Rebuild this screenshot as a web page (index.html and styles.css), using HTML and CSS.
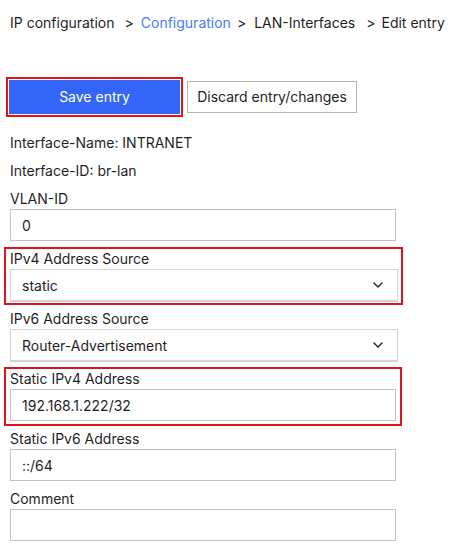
FILE: index.html
```html
<!DOCTYPE html>
<html lang="en">
<head>
<meta charset="utf-8">
<title>Edit entry</title>
<link rel="stylesheet" href="styles.css">
</head>
<body>
<nav class="crumbs">
  <span class="crumb">IP configuration</span>
  <span class="sep sep-1">&gt;</span>
  <span class="crumb link">Configuration</span>
  <span class="sep sep-2">&gt;</span>
  <span class="crumb">LAN-Interfaces</span>
  <span class="sep sep-3">&gt;</span>
  <span class="crumb">Edit entry</span>
</nav>

<div class="actions">
  <button class="btn btn-primary" type="button">Save entry</button>
  <button class="btn btn-secondary" type="button">Discard entry/changes</button>
</div>

<p class="info">Interface-Name: INTRANET</p>
<p class="info">Interface-ID: br-lan</p>

<div class="field">
  <label class="label">VLAN-ID</label>
  <input class="input" type="text" value="0">
</div>

<div class="hl hl-select">
  <div class="field">
    <label class="label">IPv4 Address Source</label>
    <div class="select-wrap">
      <select class="select"><option>static</option></select>
      <svg class="chevron" width="10" height="6" viewBox="0 0 10 6"><path d="M1 1 L5 5 L9 1" fill="none" stroke="#222" stroke-width="1.4" stroke-linecap="round" stroke-linejoin="round"/></svg>
    </div>
  </div>
</div>

<div class="field">
  <label class="label">IPv6 Address Source</label>
  <div class="select-wrap">
    <select class="select"><option>Router-Advertisement</option></select>
    <svg class="chevron" width="10" height="6" viewBox="0 0 10 6"><path d="M1 1 L5 5 L9 1" fill="none" stroke="#222" stroke-width="1.4" stroke-linecap="round" stroke-linejoin="round"/></svg>
  </div>
</div>

<div class="hl hl-input">
  <div class="field">
    <label class="label">Static IPv4 Address</label>
    <input class="input" type="text" value="192.168.1.222/32">
  </div>
</div>

<div class="field">
  <label class="label">Static IPv6 Address</label>
  <input class="input" type="text" value="::/64">
</div>

<div class="field">
  <label class="label">Comment</label>
  <input class="input" type="text" value="">
</div>
</body>
</html>
```

FILE: styles.css
```css
* { box-sizing: border-box; }

html, body {
  margin: 0;
  background: #ffffff;
}

body {
  padding: 13px 0 0 10px;
  font-family: Inter, "Noto Sans", sans-serif;
  font-size: 14px;
  line-height: 20px;
  color: #1f1f1f;
}

.crumbs {
  display: flex;
  align-items: baseline;
  white-space: nowrap;
  height: 20px;
}

.crumb.link { color: #4a7af5; }

.sep { color: #2a2a2a; }
.sep-1 { margin: 0 7px 0 10px; }
.sep-2 { margin: 0 8px 0 6px; }
.sep-3 { margin: 0 6px 0 11px; }

.actions {
  display: flex;
  align-items: center;
  gap: 7px;
  margin: 47px 0 19px -1px;
  height: 34px;
}

.btn {
  font-family: inherit;
  font-size: 14px;
  line-height: 20px;
  margin: 0;
  cursor: pointer;
}

.btn-primary {
  width: 171px;
  height: 34px;
  background: #3366f8;
  color: #ffffff;
  border: none;
  box-shadow: 0 0 0 1px #ffffff, 0 0 0 3px #e3111b;
}

.btn-secondary {
  width: 170px;
  height: 32px;
  background: #ffffff;
  color: #1f1f1f;
  border: 1px solid #b4b4b4;
}

.info {
  margin: 0 0 8px;
  height: 20px;
}

.field {
  margin-bottom: 8px;
}

.label {
  display: block;
  height: 20px;
}

.input {
  display: block;
  width: 386px;
  height: 32px;
  margin: 0;
  padding: 0 11px;
  border: 1px solid #c2c2c2;
  background: #ffffff;
  font-family: inherit;
  font-size: 14px;
  color: #1f1f1f;
  outline: none;
}

.select-wrap {
  position: relative;
  width: 388px;
  height: 32px;
}

.select {
  appearance: none;
  -webkit-appearance: none;
  display: block;
  width: 100%;
  height: 32px;
  margin: 0;
  padding: 0 11px;
  border: 1px solid #d6d6d6;
  border-radius: 0;
  background: #ffffff;
  box-shadow: 0 1px 1px rgba(0, 0, 0, 0.18);
  font-family: inherit;
  font-size: 14px;
  color: #1f1f1f;
}

.chevron {
  position: absolute;
  right: 15px;
  top: 13px;
  pointer-events: none;
}

.hl {
  width: fit-content;
  border: 2px solid #e3111b;
}

.hl .field { margin-bottom: 0; }

.hl-select {
  margin: -2px 0 4px -6px;
  padding: 0 3px 2px 4px;
}

.hl-input {
  margin: -2px 0 3px -6px;
  padding: 0 4px 3px 4px;
}
```
